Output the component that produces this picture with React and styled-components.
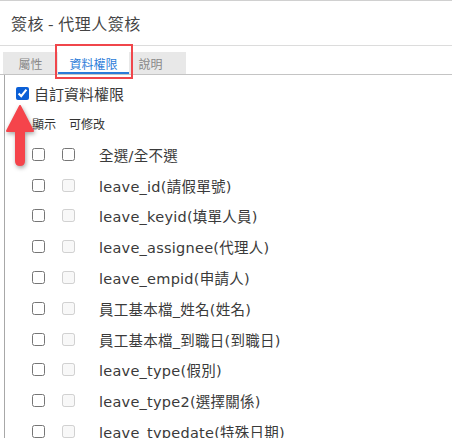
import React from 'react'
import styled, { createGlobalStyle } from 'styled-components'

const GlobalStyle = createGlobalStyle`
  html, body {
    margin: 0;
    padding: 0;
    background: #fff;
    overflow: hidden;
  }
  body {
    font-family: "Noto Sans CJK TC", sans-serif;
    color: #333;
  }
`

const Window = styled.div`
  width: 452px;
  height: 438px;
  border-top: 1px solid #d0d0d0;
  box-sizing: border-box;
  position: relative;
  overflow: hidden;
`

const TitleBar = styled.div`
  height: 44px;
  display: flex;
  align-items: center;
  padding-left: 11px;
  border-bottom: 1px solid #dcdcdc;
  font-size: 16px;
  color: #444;
  letter-spacing: 0.5px;
`

const TabStrip = styled.div`
  padding: 6px 0 0 3px;
  border-bottom: 1px solid #c4c4c4;
  display: flex;
`

const TabList = styled.div`
  display: flex;
  background: #e8e8e8;
  height: 22px;
  padding-right: 14px;
`

const Tab = styled.div`
  display: flex;
  align-items: center;
  justify-content: center;
  width: ${p => p.$w}px;
  height: 22px;
  box-sizing: border-box;
  font-size: 12px;
  color: ${p => (p.$active ? '#2b7cd9' : '#888')};
  background: ${p => (p.$active ? '#fff' : 'transparent')};
  border-bottom: 2px solid ${p => (p.$active ? '#2b7cd9' : 'transparent')};
  padding-top: 2px;
`

const Panel = styled.div`
  margin-left: 4px;
  border-left: 1px solid #a8a8a8;
  height: 400px;
`

const CustomRow = styled.label`
  display: flex;
  align-items: center;
  gap: 5px;
  height: 30px;
  padding: 3px 0 0 11px;
  font-size: 15px;
  color: #3a3a3a;
`

const Box = styled.input`
  margin: 0;
  width: 13px;
  height: 13px;
  accent-color: #0b5fd6;
`

const HeadRow = styled.div`
  display: flex;
  gap: 13px;
  margin-top: 4px;
  padding-left: 27px;
  height: 22px;
  align-items: center;
  font-size: 12px;
  color: #333;
`

const List = styled.div`
  padding-top: 5px;
`

const FieldRow = styled.div`
  display: grid;
  grid-template-columns: 30px 37px 1fr;
  align-items: center;
  height: 30.8px;
  padding-left: 27px;
`

const FieldName = styled.span`
  font-family: "DejaVu Sans", "Noto Sans CJK TC", sans-serif;
  font-size: 14.5px;
  letter-spacing: 0.25px;
  color: #3a3a3a;
  white-space: nowrap;
`

const Highlight = styled.div`
  position: absolute;
  left: 55px;
  top: 43px;
  width: 78px;
  height: 35px;
  box-sizing: border-box;
  border: 2px solid #f0464b;
  pointer-events: none;
`

const Arrow = styled.svg`
  position: absolute;
  left: 3px;
  top: 103px;
  filter: drop-shadow(1px 2px 2px rgba(0, 0, 0, 0.35));
`

const fields = [
  'leave_id(請假單號)',
  'leave_keyid(填單人員)',
  'leave_assignee(代理人)',
  'leave_empid(申請人)',
  '員工基本檔_姓名(姓名)',
  '員工基本檔_到職日(到職日)',
  'leave_type(假別)',
  'leave_type2(選擇關係)',
  'leave_typedate(特殊日期)',
]

export default function App() {
  return (
    <>
      <GlobalStyle />
      <Window>
        <TitleBar>簽核 - 代理人簽核</TitleBar>
        <TabStrip>
          <TabList>
            <Tab $w={55}>屬性</Tab>
            <Tab $w={71} $active>資料權限</Tab>
            <Tab $w={43}>說明</Tab>
          </TabList>
        </TabStrip>
        <Panel>
          <CustomRow>
            <Box type="checkbox" defaultChecked />
            自訂資料權限
          </CustomRow>
          <HeadRow>
            <span>顯示</span>
            <span>可修改</span>
          </HeadRow>
          <List>
            <FieldRow>
              <Box type="checkbox" />
              <Box type="checkbox" />
              <FieldName>全選/全不選</FieldName>
            </FieldRow>
            {fields.map(f => (
              <FieldRow key={f}>
                <Box type="checkbox" />
                <Box type="checkbox" disabled />
                <FieldName>{f}</FieldName>
              </FieldRow>
            ))}
          </List>
        </Panel>
        <Highlight />
        <Arrow width="34" height="64" viewBox="0 0 34 64">
          <path
            d="M17 2 L30 27 L21 27 L21 57 Q21 61 17 61 Q13 61 13 57 L13 27 L4 27 Z"
            fill="#f5444b"
            stroke="#f5444b"
            strokeWidth="2"
            strokeLinejoin="round"
          />
        </Arrow>
      </Window>
    </>
  )
}
